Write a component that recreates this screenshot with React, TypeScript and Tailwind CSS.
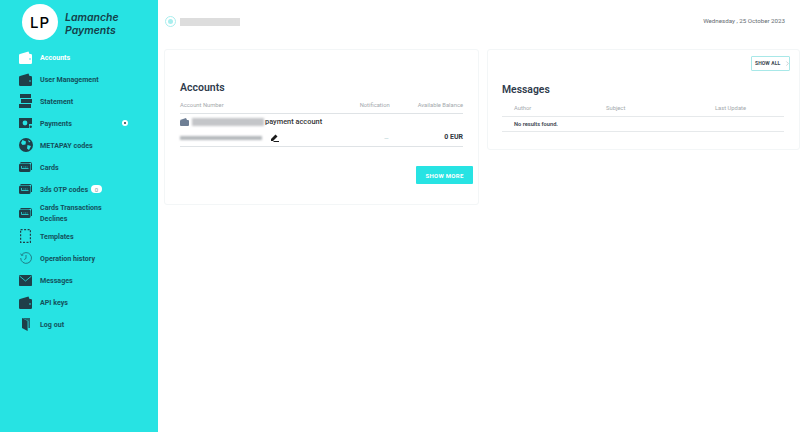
import { ChevronRight } from "lucide-react";
import type { ReactNode } from "react";

const dark = "#1f3f49";
const teal = "#27e3e3";

function Wallet({ color = dark }: { color?: string }) {
  return (
    <svg width="13" height="13" viewBox="0 0 13 13">
      <path d="M1 3 L9.5 0.5 L10.5 3 Z" fill={color} />
      <rect x="0" y="3" width="13" height="10" rx="1.2" fill={color} />
      <circle cx="11" cy="8" r="0.8" fill={teal} />
    </svg>
  );
}

function Statement() {
  return (
    <svg width="13" height="14" viewBox="0 0 13 14" fill={dark}>
      <path d="M1 0 H12 V4 H1 Z" />
      <path d="M2 5 H13 V9 H2 Z" />
      <path d="M0 10 H12 V14 H0 Z" />
    </svg>
  );
}

function Money() {
  return (
    <svg width="13" height="10" viewBox="0 0 13 10">
      <path d="M0 0 H13 V6 H10 V10 H0 Z" fill={dark} />
      <circle cx="6" cy="5" r="2.4" fill={teal} />
      <circle cx="11.7" cy="8.7" r="1.2" fill={dark} />
    </svg>
  );
}

function Globe() {
  return (
    <svg width="14" height="14" viewBox="0 0 14 14">
      <circle cx="7" cy="7" r="7" fill={dark} />
      <path d="M3.5 2 L7 3.5 L6.5 6.5 L3.5 7 L2 5 Z M8.5 7 L12 8 L10 12 L8 10.5 Z M9 2 L11.5 3.5 L10 4.5 Z" fill={teal} />
    </svg>
  );
}

function Card() {
  return (
    <svg width="13" height="10" viewBox="0 0 13 10" fill="none">
      <path d="M1.5 0.5 H11.5 Q12.5 0.5 12.5 1.5 V8" stroke={dark} strokeWidth="1" />
      <rect x="0" y="1.5" width="11.5" height="8.5" rx="1.5" fill={dark} />
      <path d="M2.5 4 V6.5 H9.5" stroke={teal} strokeWidth="0.8" />
      <path d="M4.5 5 H9" stroke={teal} strokeWidth="0.8" strokeDasharray="0.8 0.8" />
    </svg>
  );
}

function Templates() {
  return (
    <svg width="11" height="14" viewBox="0 0 11 14" fill="none">
      <rect x="0.6" y="0.6" width="9.8" height="12.8" stroke={dark} strokeWidth="1.2" strokeDasharray="2 1.5" />
    </svg>
  );
}

function History() {
  return (
    <svg width="12" height="12" viewBox="0 0 12 12" fill="none" stroke="#1f6570" strokeWidth="0.8">
      <path d="M1.6 3 A5.4 5.4 0 1 1 0.7 6" />
      <path d="M0.7 1.6 L1.6 3.4 L3.4 3" />
      <path d="M6 3 V6.4 L4.2 7.6" />
    </svg>
  );
}

function Mail() {
  return (
    <svg width="13" height="11" viewBox="0 0 13 11">
      <rect width="13" height="11" rx="0.8" fill={dark} />
      <path d="M0.5 1 L6.5 6 L12.5 1" fill="none" stroke={teal} strokeWidth="0.8" />
    </svg>
  );
}

function Door() {
  return (
    <svg width="8" height="13" viewBox="0 0 8 13">
      <path d="M0 0 H8 V10 H6.4 V3 Z" fill={dark} opacity="0.75" />
      <path d="M0 0 L5.6 3 V13 L0 10 Z" fill={dark} />
    </svg>
  );
}

type Item = { label: ReactNode; icon: ReactNode; extra?: ReactNode; tall?: boolean; active?: boolean };

const items: Item[] = [
  { label: "Accounts", icon: <Wallet color="#ffffff" />, active: true },
  { label: "User Management", icon: <Wallet /> },
  { label: "Statement", icon: <Statement /> },
  {
    label: "Payments",
    icon: <Money />,
    extra: (
      <span className="absolute left-[122px] flex h-[6px] w-[6px] items-center justify-center rounded-full bg-white">
        <span className="h-[2px] w-[2px] rounded-full bg-[#1f3f49]" />
      </span>
    ),
  },
  { label: "METAPAY codes", icon: <Globe /> },
  { label: "Cards", icon: <Card /> },
  {
    label: "3ds OTP codes",
    icon: <Card />,
    extra: (
      <span className="ml-[3px] flex h-[8px] w-[11px] items-center justify-center rounded-full bg-white text-[6px] text-[#8a9aa0]">
        0
      </span>
    ),
  },
  {
    label: (
      <>
        Cards Transactions
        <br />
        Declines
      </>
    ),
    icon: <Card />,
    tall: true,
  },
  { label: "Templates", icon: <Templates /> },
  { label: "Operation history", icon: <History /> },
  { label: "Messages", icon: <Mail /> },
  { label: "API keys", icon: <Wallet /> },
  { label: "Log out", icon: <Door /> },
];

function Sidebar() {
  return (
    <aside className="flex h-[432px] w-[158px] shrink-0 flex-col bg-[#27e3e3]">
      <div className="flex h-[46px] items-start pl-[22px] pt-[4px]">
        <div className="flex h-[36px] w-[36px] items-center justify-center rounded-full bg-white">
          <span className="font-['Inter',sans-serif] text-[15px] leading-none font-medium tracking-[1px] text-black">
            LP
          </span>
        </div>
        <div className="ml-[7px] mt-[8px] font-['Inter',sans-serif] text-[10.5px] leading-[12.5px] font-semibold text-[#14404a] italic">
          Lamanche
          <br />
          Payments
        </div>
      </div>
      <nav className="flex flex-col">
        {items.map((item, i) => (
          <div key={i} className={`relative flex items-center ${item.tall ? "h-[25px]" : "h-[22px]"}`}>
            <span className="flex w-[40px] shrink-0 items-center justify-center pl-[18px] pr-[7px]">{item.icon}</span>
            <span
              className={`pt-[1px] text-[7.1px] leading-[11px] font-bold ${item.active ? "text-white" : "text-[#14505c]"}`}
            >
              {item.label}
            </span>
            {item.extra}
          </div>
        ))}
      </nav>
    </aside>
  );
}

function Header() {
  return (
    <header className="flex h-[49px] items-center justify-between pb-[6px] pl-[7px] pr-[17px]">
      <div className="flex items-center gap-[4px]">
        <span className="flex h-[11px] w-[11px] items-center justify-center rounded-full border border-[#a9eeee]">
          <span className="h-[5px] w-[5px] rounded-full bg-[#a9eeee]" />
        </span>
        <span className="h-[8px] w-[60px] bg-[#dddddd] blur-[0.5px]" />
      </div>
      <span className="text-[6.2px] text-[#666d72]">Wednesday , 25 October 2023</span>
    </header>
  );
}

function Accounts() {
  return (
    <section className="flex h-[156px] w-[315px] shrink-0 flex-col rounded-[3px] border border-[#f3f6f7] px-[15px] pt-[31px]">
      <h2 className="text-[10.5px] leading-[13px] font-semibold text-[#2f3b4c]">Accounts</h2>
      <div className="mt-[5px] flex h-[15px] items-center justify-between border-b border-[#dfe3e6] pb-[2px] text-[5.8px] text-[#a4a9ad]">
        <span>Account Number</span>
        <div className="flex gap-[28px]">
          <span>Notification</span>
          <span>Available Balance</span>
        </div>
      </div>
      <div className="flex h-[15px] items-center">
        <svg width="9" height="8" viewBox="0 0 9 8" className="mr-[3px]">
          <path d="M0 2 L6 0 L7 2 Z" fill="#6f7f95" />
          <rect y="2" width="9" height="6" rx="1" fill="#6f7f95" />
        </svg>
        <span className="h-[8px] w-[72px] bg-[#c4c6c9] blur-[1px]" />
        <span className="ml-[1px] text-[7.4px] font-medium text-[#333333]">payment account</span>
      </div>
      <div className="relative flex h-[18px] items-center border-b border-[#dfe3e6]">
        <span className="h-[4px] w-[82px] bg-[#b4b8bc] blur-[1px]" />
        <svg width="9" height="8" viewBox="0 0 9 8" className="ml-[8px]" fill="#1c1c1c">
          <path d="M1 5 L5.5 0.5 L7.5 2.5 L3 7 L1 7 Z" />
          <path d="M4 7 H9 V8 H3 Z" />
        </svg>
        <span className="absolute left-[204px] text-[6px] text-[#a4c6ca]">—</span>
        <span className="ml-auto text-[7px] font-bold text-[#2f3640]">0 EUR</span>
      </div>
      <div className="mt-[19px] flex justify-end">
        <button className="-mr-[10px] h-[18px] w-[57px] rounded-[1px] bg-[#27e3e3] text-[6px] font-bold tracking-[0.3px] text-white">
          SHOW MORE
        </button>
      </div>
    </section>
  );
}

function Messages() {
  return (
    <section className="flex h-[101px] w-[313px] shrink-0 flex-col rounded-[3px] border border-[#f3f6f7] pl-[14px] pr-[15px] pt-[6px]">
      <div className="flex justify-end">
        <button className="-mr-[6px] flex h-[15px] w-[39px] items-center gap-[4px] whitespace-nowrap rounded-[1px] border border-[#a8e8e8] pl-[3px] text-[5px] font-bold tracking-[0.1px] text-[#3c4650]">
          SHOW ALL
          <ChevronRight size={7} className="shrink-0 text-[#a9b4b8]" />
        </button>
      </div>
      <h2 className="mt-[12px] text-[10.4px] leading-[13px] font-semibold text-[#2f3b4c]">Messages</h2>
      <div className="mt-[7px] flex h-[14px] items-center border-b border-[#e6e9eb] pb-[2px] pl-[12px] text-[5.8px] text-[#a4a9ad]">
        <span className="w-[92px]">Author</span>
        <span className="w-[109px]">Subject</span>
        <span>Last Update</span>
      </div>
      <div className="flex h-[15px] items-center border-b border-[#e6e9eb] pl-[12px] text-[5.7px] font-semibold text-[#3c4650]">
        No results found.
      </div>
    </section>
  );
}

export default function App() {
  return (
    <div className="flex h-[432px] w-[802px] overflow-hidden bg-white font-['Roboto',sans-serif]">
      <Sidebar />
      <main className="flex min-w-0 flex-1 flex-col">
        <Header />
        <div className="flex items-start gap-[8px] pl-[6px]">
          <Accounts />
          <Messages />
        </div>
      </main>
    </div>
  );
}
